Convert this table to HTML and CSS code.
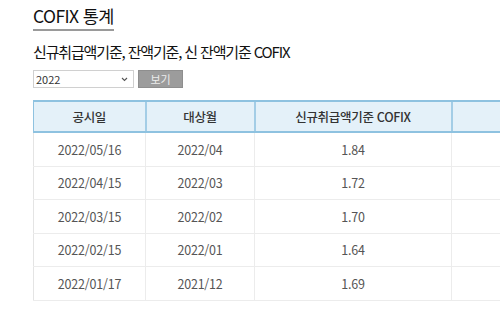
FILE: index.html
```html
<!DOCTYPE html>
<html lang="ko">
<head>
<meta charset="utf-8">
<title>COFIX 통계</title>
<link rel="stylesheet" href="styles.css">
</head>
<body>
<div class="page">
  <h1 class="title">COFIX 통계</h1>
  <h2 class="subtitle">신규취급액기준, 잔액기준, 신 잔액기준 COFIX</h2>
  <div class="search">
    <div class="select-wrap">
      <select class="year">
        <option>2022</option>
        <option>2021</option>
      </select>
      <svg class="chev" width="7" height="5" viewBox="0 0 7 5"><path d="M1 1 L3.5 3.5 L6 1" fill="none" stroke="#555" stroke-width="1.1"/></svg>
    </div>
    <button class="btn" type="button">보기</button>
  </div>
  <div class="table-wrap">
    <table class="tbl">
      <colgroup>
        <col class="c1"><col class="c2"><col class="c3"><col class="c4">
      </colgroup>
      <thead>
        <tr><th>공시일</th><th>대상월</th><th>신규취급액기준 COFIX</th><th></th></tr>
      </thead>
      <tbody>
        <tr><td>2022/05/16</td><td>2022/04</td><td>1.84</td><td></td></tr>
        <tr><td>2022/04/15</td><td>2022/03</td><td>1.72</td><td></td></tr>
        <tr><td>2022/03/15</td><td>2022/02</td><td>1.70</td><td></td></tr>
        <tr><td>2022/02/15</td><td>2022/01</td><td>1.64</td><td></td></tr>
        <tr><td>2022/01/17</td><td>2021/12</td><td>1.69</td><td></td></tr>
      </tbody>
    </table>
  </div>
</div>
</body>
</html>
```
FILE: styles.css
```css
html, body {
  margin: 0;
  padding: 0;
  background: #fff;
  overflow: hidden;
}
body {
  font-family: "Noto Sans CJK KR", "Noto Sans", sans-serif;
  color: #222;
}
.page {
  padding: 4px 0 0 33px;
  overflow: hidden;
}
.title {
  display: inline-block;
  margin: 0;
  font-size: 17.5px;
  font-weight: 400;
  line-height: 22px;
  letter-spacing: -0.6px;
  color: #111;
  padding-bottom: 2px;
  border-bottom: 2px solid #9a9a9a;
}
.subtitle {
  margin: 11px 0 0;
  font-size: 15px;
  font-weight: 400;
  line-height: 20px;
  letter-spacing: -1.15px;
  color: #111;
}
.search {
  display: flex;
  gap: 4px;
  margin-top: 8px;
  height: 18px;
}
.select-wrap {
  position: relative;
  width: 101px;
  height: 18px;
}
.year {
  display: block;
  appearance: none;
  -webkit-appearance: none;
  width: 101px;
  height: 18px;
  min-height: 0;
  box-sizing: border-box;
  border: 1px solid #d0d0d0;
  background: #fff;
  font-family: "Noto Sans CJK KR", "Noto Sans", sans-serif;
  font-size: 11px;
  line-height: 16px;
  color: #333;
  padding: 0 0 0 2px;
  margin: 0;
  border-radius: 0;
}
.chev {
  position: absolute;
  right: 6px;
  top: 7px;
  pointer-events: none;
}
.btn {
  display: block;
  width: 45px;
  height: 18px;
  box-sizing: border-box;
  border: 1px solid #8e8e8e;
  background: #9c9c9c;
  color: #ececec;
  font-family: "Noto Sans CJK KR", "Noto Sans", sans-serif;
  font-size: 11px;
  padding: 0;
  margin: 0;
  line-height: 16px;
}
.table-wrap {
  margin-top: 12px;
  width: 600px;
}
.tbl {
  border-collapse: collapse;
  table-layout: fixed;
  width: 600px;
  font-size: 12px;
}
.c1 { width: 112px; }
.c2 { width: 109px; }
.c3 { width: 197px; }
.c4 { width: 182px; }
.tbl th {
  height: 29px;
  padding: 0;
  background: #e4f1f9;
  border-top: 2px solid #8ec2e0;
  border-bottom: 2px solid #8ec2e0;
  border-left: 2px solid #a3cde6;
  font-weight: 500;
  color: #333;
  font-size: 12.5px;
  letter-spacing: -0.3px;
}
.tbl th:first-child { border-left: 1px solid #8ec2e0; }
.tbl td {
  height: 32.5px;
  padding: 0;
  text-align: center;
  color: #555;
  border: 1px solid #ececec;
  border-top: 0;
  letter-spacing: -0.2px;
  font-size: 12.5px;
}
.tbl td:first-child { border-left: 1px solid #e4e4e4; }
```
